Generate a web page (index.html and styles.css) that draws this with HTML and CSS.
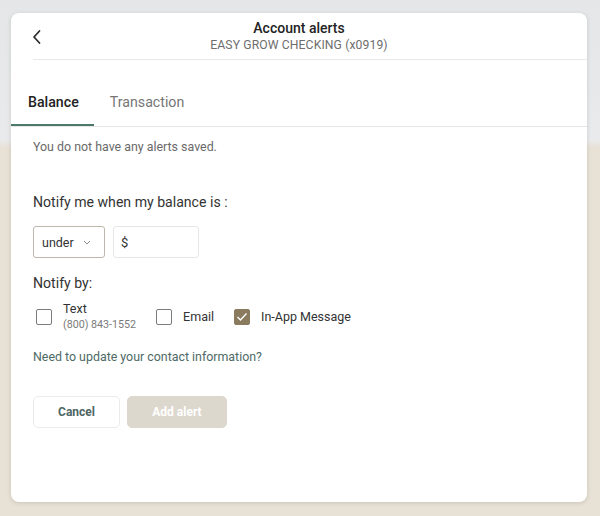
FILE: index.html
```html
<!DOCTYPE html>
<html>
<head>
<meta charset="utf-8">
<link rel="stylesheet" href="styles.css">
</head>
<body>
<div class="card">
  <div class="header">
    <button class="back" aria-label="Back">
      <svg width="10" height="16" viewBox="0 0 10 16"><polyline points="7.5,2 2,8 7.5,14" fill="none" stroke="#2e2e2e" stroke-width="1.8" stroke-linecap="round" stroke-linejoin="round"/></svg>
    </button>
    <div class="titles">
      <div class="title">Account alerts</div>
      <div class="subtitle">EASY GROW CHECKING (x0919)</div>
    </div>
    <div></div>
  </div>
  <div class="divider"></div>
  <div class="tabs">
    <div class="tab active">Balance</div>
    <div class="tab">Transaction</div>
  </div>
  <div class="content">
    <p class="empty">You do not have any alerts saved.</p>
    <p class="label">Notify me when my balance is :</p>
    <div class="fields">
      <div class="select">
        <span>under</span>
        <svg width="8" height="5" viewBox="0 0 8 5"><polyline points="1,1 4,4 7,1" fill="none" stroke="#8a8a8a" stroke-width="1"/></svg>
      </div>
      <div class="input"><span>$</span></div>
    </div>
    <p class="label by">Notify by:</p>
    <div class="checks">
      <div class="check">
        <span class="box"></span>
        <div class="ctext">
          <div>Text</div>
          <div class="phone">(800) 843-1552</div>
        </div>
      </div>
      <div class="check">
        <span class="box"></span>
        <div class="ctext">Email</div>
      </div>
      <div class="check">
        <span class="box on">
          <svg width="12" height="10" viewBox="0 0 12 10"><polyline points="1.5,5 4.5,8 10.5,1.5" fill="none" stroke="#fff" stroke-width="1.4"/></svg>
        </span>
        <div class="ctext">In-App Message</div>
      </div>
    </div>
    <p class="link">Need to update your contact information?</p>
    <div class="buttons">
      <button class="btn cancel">Cancel</button>
      <button class="btn add">Add alert</button>
    </div>
  </div>
</div>
</body>
</html>
```
FILE: styles.css
```css
* { box-sizing: border-box; }
html, body { margin: 0; padding: 0; }
body {
  width: 600px;
  height: 516px;
  overflow: hidden;
  font-family: Roboto, "Liberation Sans", sans-serif;
  background: linear-gradient(to bottom, #e4e6e8 0, #e9eaeb 140px, #e7e1d6 148px, #e7e1d6 100%);
  padding-top: 13px;
}
.card {
  margin-left: 11px;
  width: 576px;
  height: 489px;
  background: #fff;
  border-radius: 8px;
  box-shadow: 0 1px 4px rgba(80, 70, 50, 0.18);
}
.header {
  display: grid;
  grid-template-columns: 1fr auto 1fr;
  align-items: center;
  padding: 6px 0 6px 0;
}
.back {
  justify-self: start;
  margin-left: 20px;
  margin-top: 2px;
  background: none;
  border: 0;
  padding: 0;
  width: 12px;
  height: 18px;
  display: flex;
  align-items: center;
  justify-content: center;
}
.titles { text-align: center; }
.title {
  font-size: 14px;
  line-height: 18px;
  font-weight: 500;
  color: #232323;
}
.subtitle {
  font-size: 12.2px;
  line-height: 16px;
  color: #6e6e6e;
  letter-spacing: 0.1px;
}
.divider {
  margin-left: 22px;
  height: 1px;
  background: #e8e8e8;
}
.tabs {
  display: flex;
  margin-top: 20px;
  border-bottom: 1px solid #e6e6e6;
}
.tab {
  padding: 12px 16px 12px;
  font-size: 14.2px;
  line-height: 20px;
  color: #767676;
  border-bottom: 2px solid transparent;
}
.tab.active {
  padding-left: 17px;
  padding-right: 15px;
  color: #232323;
  font-weight: 500;
  border-bottom-color: #4d7a68;
}
.content { padding-left: 22px; }
p { margin: 0; }
.empty {
  margin-top: 12px;
  font-size: 12.4px;
  line-height: 16px;
  color: #6a6a6a;
}
.label {
  margin-top: 37px;
  font-size: 14.1px;
  line-height: 20px;
  color: #333;
}
.label.by { margin-top: 15px; }
.fields {
  display: flex;
  gap: 8px;
  margin-top: 14px;
}
.select {
  width: 72px;
  height: 32px;
  border: 1.5px solid #bdb7ad;
  border-radius: 3px;
  display: flex;
  align-items: center;
  justify-content: space-between;
  padding: 0 13px 0 8px;
  font-size: 12.5px;
  color: #333;
}
.input {
  width: 86px;
  height: 32px;
  border: 1px solid #e6e6e6;
  border-radius: 3px;
  display: flex;
  align-items: center;
  padding-left: 7px;
  font-size: 13px;
  color: #333;
}
.checks {
  display: flex;
  gap: 20px;
  margin-top: 8px;
  padding-left: 3px;
  align-items: flex-start;
}
.check {
  display: flex;
  gap: 11px;
  align-items: flex-start;
}
.box {
  width: 16px;
  height: 16px;
  margin-top: 8px;
  border: 1.5px solid #7c7c7c;
  border-radius: 2px;
  display: flex;
  align-items: center;
  justify-content: center;
}
.box.on {
  background: #8a7b5f;
  border-color: #8a7b5f;
}
.ctext {
  font-size: 12.5px;
  line-height: 16px;
  color: #333;
  padding-top: 8px;
}
.check:first-child .ctext { padding-top: 0; }
.phone {
  font-size: 10.7px;
  line-height: 16px;
  color: #7a7a7a;
}
.link {
  margin-top: 16px;
  font-size: 12.4px;
  line-height: 16px;
  color: #4e6a66;
}
.buttons {
  display: flex;
  gap: 7px;
  margin-top: 31px;
}
.btn {
  height: 32px;
  border-radius: 5px;
  font-family: Roboto, "Liberation Sans", sans-serif;
  font-size: 12px;
  font-weight: 700;
  padding: 0;
}
.cancel {
  width: 87px;
  background: #fff;
  border: 1px solid #ebebeb;
  color: #4e6664;
}
.add {
  width: 100px;
  background: #ddd8ce;
  border: 1px solid #ddd8ce;
  color: #fff;
}
```
